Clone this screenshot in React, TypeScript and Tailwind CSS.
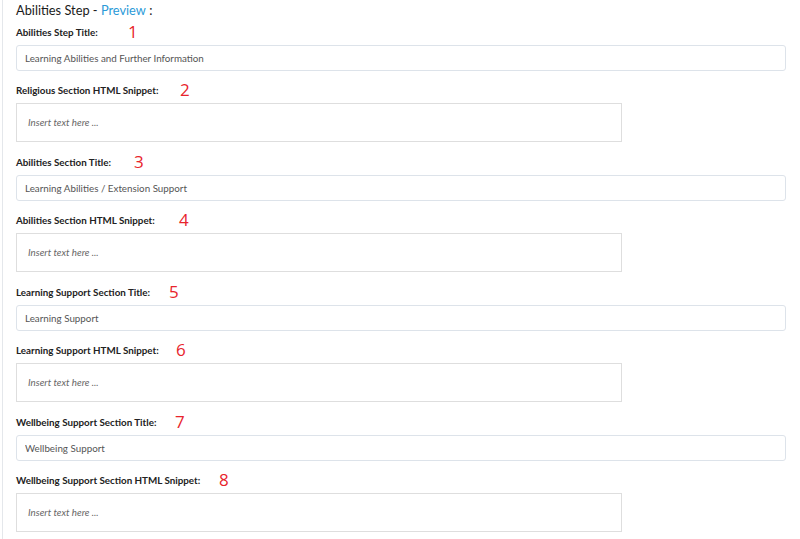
const fields = [
  { label: "Abilities Step Title:", n: "1", pos: "left-[112px]", kind: "input", value: "Learning Abilities and Further Information" },
  { label: "Religious Section HTML Snippet:", n: "2", pos: "left-[164px]", kind: "snippet" },
  { label: "Abilities Section Title:", n: "3", pos: "left-[118px]", kind: "input", value: "Learning Abilities / Extension Support" },
  { label: "Abilities Section HTML Snippet:", n: "4", pos: "left-[163px]", kind: "snippet" },
  { label: "Learning Support Section Title:", n: "5", pos: "left-[153px]", kind: "input", value: "Learning Support" },
  { label: "Learning Support HTML Snippet:", n: "6", pos: "left-[160px]", kind: "snippet" },
  { label: "Wellbeing Support Section Title:", n: "7", pos: "left-[159px]", kind: "input", value: "Wellbeing Support" },
  { label: "Wellbeing Support Section HTML Snippet:", n: "8", pos: "left-[203px]", kind: "snippet" },
];

const App = () => {
  return (
    <div className="w-[800px] h-[539px] bg-white overflow-hidden font-['Lato','Open_Sans',sans-serif]">
      <div className="ml-[2px] h-full border-l border-[#e4e7eb] pl-[13px] pr-[14px]">
        {/* step heading */}
        <div className="h-[22px] flex items-center text-[12.8px] text-[#1a1a1a]">
          Abilities Step -&nbsp;<span className="text-[#2b9ad8]">Preview</span>&nbsp;:
        </div>

        {fields.map((f) => (
          <div key={f.n} className={f.kind === "input" ? "mb-[9px]" : "mb-[10px]"}>
            {/* label + red annotation number */}
            <div className="relative h-[20px] flex items-center">
              <span className="text-[9.8px] font-bold text-[#222]">{f.label}</span>
              <span className={`absolute ${f.pos} top-[1px] text-[17px] leading-none font-['Open_Sans',sans-serif] text-[#e8242c]`}>{f.n}</span>
            </div>
            {f.kind === "input" ? (
              <input
                type="text"
                readOnly
                defaultValue={f.value}
                className="mt-[3px] block w-full h-[26px] border border-[#dde3ea] rounded-[3px] px-[8px] text-[9.8px] text-[#555] outline-none"
              />
            ) : (
              <div className="mt-[3px] w-[606px] h-[39px] border border-[#dedede] flex items-center pl-[11px] text-[9.8px] italic text-[#666]">
                Insert text here ...
              </div>
            )}
          </div>
        ))}
      </div>
    </div>
  );
};

export default App;
